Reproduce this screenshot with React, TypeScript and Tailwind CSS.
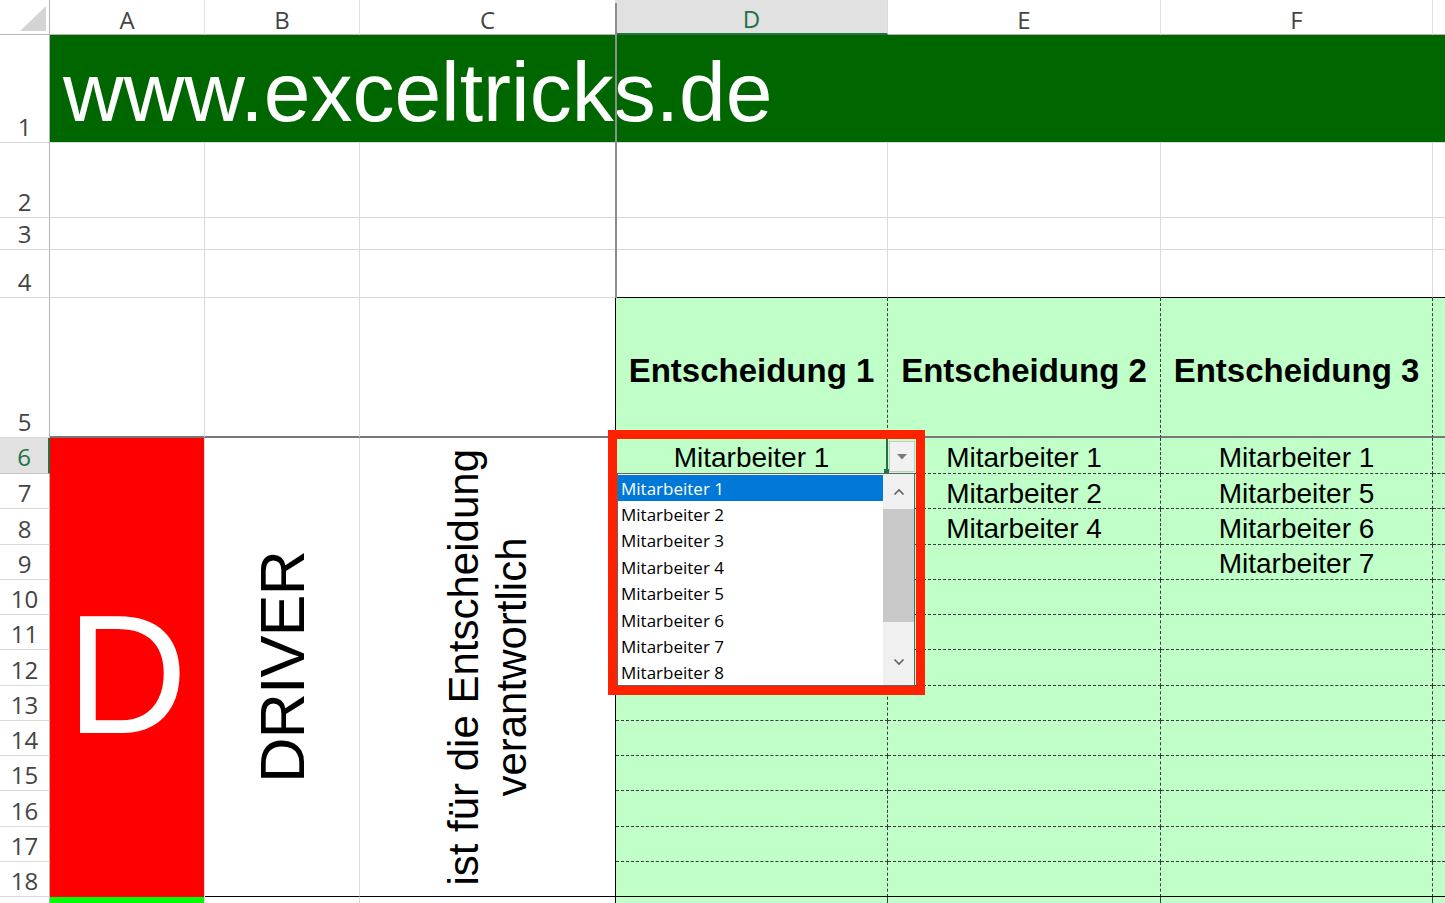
import React from 'react';

const sans = "font-['Liberation_Sans',Arial,sans-serif]";
const ui = "font-['Open_Sans','Noto_Sans',sans-serif]";

const gridCell = 'border-r border-b border-[#dadada]';
const greenCell = 'bg-[#c0ffc8] border-r border-b border-dashed border-[#3a3a3a]';

function RowHead({ n, selected }: { n?: number; selected?: boolean }) {
  return (
    <div
      className={
        selected
          ? `flex items-end justify-center pb-[4px] bg-[#e1e1e1] border-r-2 border-r-[#217346] border-b border-b-[#c8c8c8] text-[#217346] text-[24px] leading-none ${ui}`
          : `flex items-end justify-center pb-[3px] border-r border-r-[#b4b4b4] border-b border-b-[#dadada] text-[#444] text-[24px] leading-none ${ui}`
      }
    >
      {n}
    </div>
  );
}

function ColHead({ label, selected }: { label: string; selected?: boolean }) {
  return (
    <div
      className={
        selected
          ? `flex items-end justify-center pb-[2px] bg-[#e1e1e1] border-b-2 border-b-[#217346] border-r border-r-[#dadada] text-[#217346] text-[24px] leading-none ${ui}`
          : `flex items-end justify-center pb-[2px] border-b border-b-[#b4b4b4] border-r border-r-[#e2e2e2] text-[#444] text-[24px] leading-none ${ui}`
      }
    >
      {label}
    </div>
  );
}

function Chevron({ up }: { up?: boolean }) {
  return (
    <svg width="12" height="8" viewBox="0 0 12 8" fill="none" stroke="#606060" strokeWidth="1.6">
      {up ? <polyline points="1.5 6.5 6 2 10.5 6.5" /> : <polyline points="1.5 1.5 6 6 10.5 1.5" />}
    </svg>
  );
}

const entries: Record<number, [string, string, string]> = {
  6: ['Mitarbeiter 1', 'Mitarbeiter 1', 'Mitarbeiter 1'],
  7: ['', 'Mitarbeiter 2', 'Mitarbeiter 5'],
  8: ['', 'Mitarbeiter 4', 'Mitarbeiter 6'],
  9: ['', '', 'Mitarbeiter 7'],
};

const listItems = [1, 2, 3, 4, 5, 6, 7, 8].map((i) => `Mitarbeiter ${i}`);

export default function App() {
  const lowerRows = [6, 7, 8, 9, 10, 11, 12, 13, 14, 15, 16, 17, 18];

  return (
    <div className="relative w-[1445px] h-[903px] overflow-hidden bg-white">
      <div className="grid h-full grid-cols-[50px_155px_155px_256px_272px_273px_272px_1fr] grid-rows-[35px_108px_75px_32px_48px_140px_36px_repeat(12,35.25px)_1fr]">
        {/* column headers */}
        <div className="flex items-end justify-end pr-[3px] pb-[3px] border-r border-r-[#b4b4b4] border-b border-b-[#b4b4b4]">
          <svg width="26" height="25" viewBox="0 0 26 25">
            <polygon points="26 0 26 25 0 25" fill="#d4d4d4" />
          </svg>
        </div>
        <ColHead label="A" />
        <ColHead label="B" />
        <ColHead label="C" />
        <ColHead label="D" selected />
        <ColHead label="E" />
        <ColHead label="F" />
        <div className="border-b border-b-[#b4b4b4]" />

        {/* row 1 */}
        <RowHead n={1} />
        <div className={`col-span-7 flex items-end pb-[8px] pl-[13px] bg-[#006600] border-b border-b-[#dadada] text-white text-[84px] leading-none whitespace-nowrap ${sans}`}>
          www.exceltricks.de
        </div>

        {/* rows 2 - 4 */}
        {[2, 3, 4].map((n) => (
          <React.Fragment key={n}>
            <RowHead n={n} />
            <div className={gridCell} />
            <div className={gridCell} />
            <div className={gridCell} />
            <div className={n === 4 ? 'border-r border-r-[#dadada] border-b border-b-black' : gridCell} />
            <div className={n === 4 ? 'border-r border-r-[#dadada] border-b border-b-black' : gridCell} />
            <div className={n === 4 ? 'border-r border-r-[#dadada] border-b border-b-black' : gridCell} />
            <div className={n === 4 ? 'border-b border-b-black' : 'border-b border-[#dadada]'} />
          </React.Fragment>
        ))}

        {/* row 5 */}
        <RowHead n={5} />
        <div className="border-r border-r-[#dadada] border-b-2 border-b-[#777]" />
        <div className="border-r border-r-[#dadada] border-b-2 border-b-[#777]" />
        <div className="border-r border-r-black border-b-2 border-b-[#777]" />
        {['Entscheidung 1', 'Entscheidung 2', 'Entscheidung 3'].map((h) => (
          <div
            key={h}
            className={`flex items-center justify-center pt-[6px] bg-[#c0ffc8] border-r border-dashed border-r-[#3a3a3a] border-b-2 [border-bottom-style:solid] border-b-[#777] text-black text-[33px] font-bold leading-none whitespace-nowrap ${sans}`}
          >
            {h}
          </div>
        ))}
        <div className="bg-[#c0ffc8] border-b-2 border-b-[#777]" />

        {/* rows 6 - 18 */}
        {lowerRows.map((n) => {
          const vals = entries[n] ?? ['', '', ''];
          const last = n === 18;
          const cls = last
            ? `${greenCell} [border-bottom-style:solid] border-b-black`
            : greenCell;
          return (
            <React.Fragment key={n}>
              <RowHead n={n} selected={n === 6} />
              {n === 6 && (
                <>
                  <div className={`row-span-13 flex items-center justify-center pt-[14px] bg-[#ff0000] border-r border-r-[#dadada] text-white text-[168px] leading-none ${sans}`}>
                    D
                  </div>
                  <div className="row-span-13 flex items-center justify-center border-r border-r-[#dadada] border-b border-b-black">
                    <div className={`[writing-mode:vertical-rl] rotate-180 whitespace-nowrap text-black text-[63px] tracking-[-1px] leading-none ${sans}`}>
                      DRIVER
                    </div>
                  </div>
                  <div className="row-span-13 flex items-center justify-center border-r border-r-black border-b border-b-black">
                    <div className={`[writing-mode:vertical-rl] rotate-180 whitespace-nowrap text-center text-black text-[42px] leading-[48px] ${sans}`}>
                      ist für die Entscheidung
                      <br />
                      verantwortlich
                    </div>
                  </div>
                </>
              )}
              {vals.map((v, i) => (
                <div key={i} className={`flex items-center justify-center pt-[5px] text-black text-[28px] leading-none whitespace-nowrap ${sans} ${cls}`}>
                  {v}
                </div>
              ))}
              <div
                className={
                  last
                    ? 'bg-[#c0ffc8] border-b border-b-black'
                    : 'bg-[#c0ffc8] border-b border-dashed border-[#3a3a3a]'
                }
              />
            </React.Fragment>
          );
        })}

        {/* row 19 (cut off) */}
        <div className="border-r border-r-[#b4b4b4]" />
        <div className="bg-[#00ff00] border-r border-r-[#dadada]" />
        <div className="border-r border-r-[#dadada]" />
        <div className="border-r border-r-black" />
        <div className="bg-[#c0ffc8] border-r border-dashed border-r-[#3a3a3a]" />
        <div className="bg-[#c0ffc8] border-r border-dashed border-r-[#3a3a3a]" />
        <div className="bg-[#c0ffc8] border-r border-dashed border-r-[#3a3a3a]" />
        <div className="bg-[#c0ffc8]" />
      </div>

      {/* frozen pane line */}
      <div className="absolute left-[615px] top-[3px] w-[2px] h-[295px] bg-[#8e8e8e]" />

      {/* data validation dropdown on D6 */}
      <div className="absolute left-[886px] top-[439px] w-[2px] h-[34px] bg-[#217346] z-10" />
      <div className="absolute left-[884px] top-[469px] w-[5px] h-[5px] bg-[#217346] z-10" />
      <div className="absolute left-[889px] top-[441px] w-[26px] h-[31px] flex items-center justify-center bg-[#f1f1f1] border border-[#c8c8c8] z-10">
        <svg width="10" height="6" viewBox="0 0 10 6">
          <polygon points="0 0 10 0 5 5.5" fill="#7a7a7a" />
        </svg>
      </div>
      <div className="absolute left-[617px] top-[473px] w-[298px] h-[213px] flex bg-white border border-[#646464] z-10">
        <div className="flex-1 pt-px">
          {listItems.map((t, i) => (
            <div
              key={t}
              className={
                i === 0
                  ? `h-[26.4px] flex items-center pl-[3px] bg-[#0078d7] text-white text-[17px] leading-none ${ui}`
                  : `h-[26.4px] flex items-center pl-[3px] text-black text-[17px] leading-none ${ui}`
              }
            >
              {t}
            </div>
          ))}
        </div>
        <div className="w-[31px] flex flex-col bg-[#f0f0f0]">
          <div className="h-[35px] flex items-center justify-center">
            <Chevron up />
          </div>
          <div className="h-[113px] bg-[#c8c8c8]" />
          <div className="flex-1" />
          <div className="h-[40px] flex items-center justify-center pb-[6px]">
            <Chevron />
          </div>
        </div>
      </div>

      {/* red highlight frame */}
      <div className="absolute left-[608px] top-[430px] w-[317px] h-[265px] border-[9px] border-[#ff2200] z-20 pointer-events-none" />
    </div>
  );
}
